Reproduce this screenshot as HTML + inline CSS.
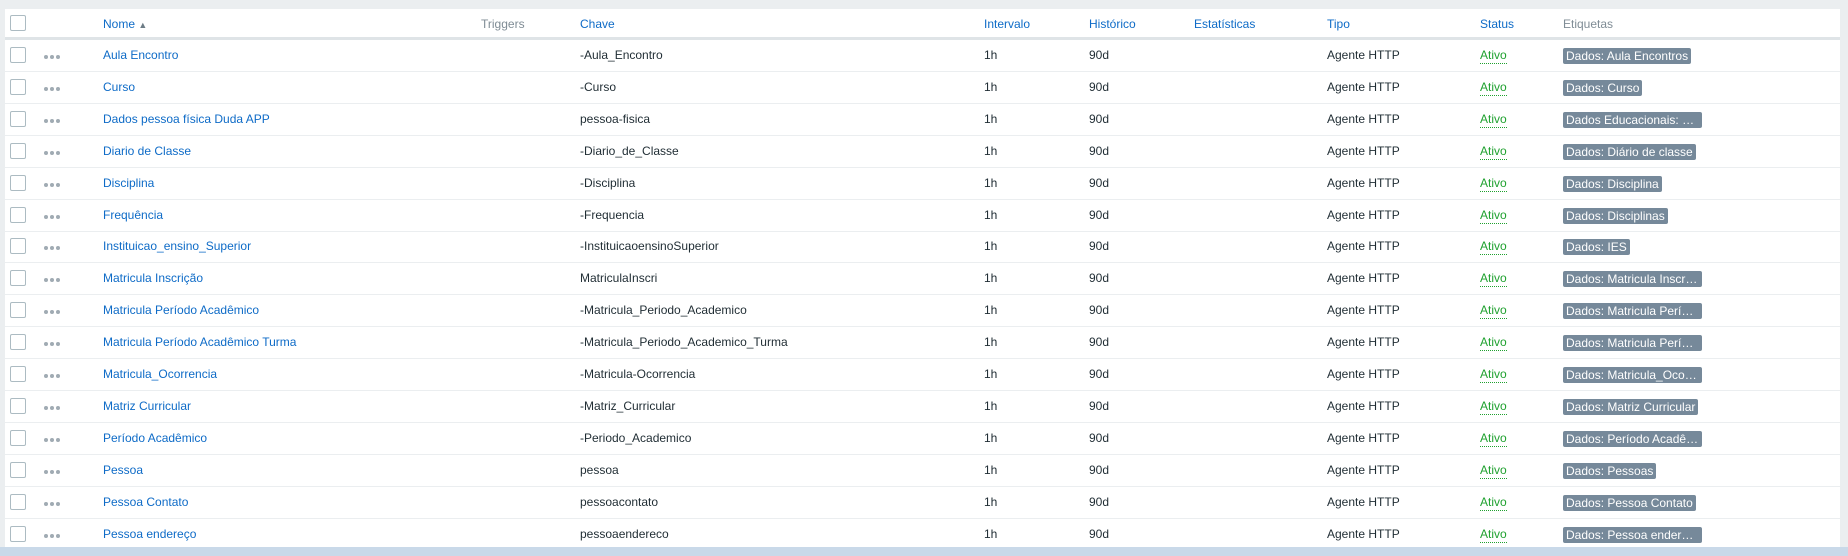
<!DOCTYPE html>
<html><head><meta charset="utf-8"><style>
*{box-sizing:border-box;margin:0;padding:0}
body{width:1848px;height:556px;background:#ebeef0;font-family:"Liberation Sans",sans-serif;font-size:12px;color:#1f2c33;position:relative;overflow:hidden}
.tbl{position:absolute;left:5px;top:9px;width:1835px;height:538px;background:#fff}
.hdr{position:absolute;left:0;top:0;width:100%;height:31px;border-bottom:3px solid #dfe4e7}
.row{position:absolute;left:0;width:100%;height:32px;border-bottom:1px solid #ebeef0}
.c{position:absolute;top:0;line-height:30px;white-space:nowrap}
.cb{position:absolute;left:5px;top:7px;width:16px;height:16px;border:1px solid #acbbc2;border-radius:2px;background:#fff}
.dots{position:absolute;left:39px;top:15px}
.dots i{display:inline-block;width:4px;height:4px;border-radius:50%;background:#a0abb3;margin-right:2px;float:left}
a{color:#0e6bc7;text-decoration:none}
.h{color:#0e6bc7}.g{color:#7f8c95}
.st{color:#1fa12f;border-bottom:1px dotted #1fa12f;line-height:15px;top:8px}
.tag{position:absolute;left:1558px;top:8px;height:16px;line-height:16px;background:#76899a;color:#fff;border-radius:2px;padding:0 3px;max-width:139px;overflow:hidden;white-space:nowrap;font-size:12px}
.bar{position:absolute;left:0;top:547px;width:1848px;height:9px;background:#c9d9e9}
</style></head><body>
<div class="tbl">
<div class="hdr"><div class="cb" style="top:6px"></div>
<div class="c h" style="left:98px">Nome <span style="font-size:9px;color:#6d7c86">▲</span></div>
<div class="c g" style="left:476px">Triggers</div>
<div class="c h" style="left:575px">Chave</div>
<div class="c h" style="left:979px">Intervalo</div>
<div class="c h" style="left:1084px">Histórico</div>
<div class="c h" style="left:1189px">Estatísticas</div>
<div class="c h" style="left:1322px">Tipo</div>
<div class="c h" style="left:1475px">Status</div>
<div class="c g" style="left:1558px">Etiquetas</div>
</div>
<div id="rows"></div>
</div>
<div class="bar"></div>
<script>
var d=[["Aula Encontro","-Aula_Encontro","Dados: Aula Encontros"],["Curso","-Curso","Dados: Curso"],["Dados pessoa física Duda APP","pessoa-fisica","Dados Educacionais: …"],["Diario de Classe","-Diario_de_Classe","Dados: Diário de classe"],["Disciplina","-Disciplina","Dados: Disciplina"],["Frequência","-Frequencia","Dados: Disciplinas"],["Instituicao_ensino_Superior","-InstituicaoensinoSuperior","Dados: IES"],["Matricula Inscrição","MatriculaInscri","Dados: Matricula Inscr…"],["Matricula Período Acadêmico","-Matricula_Periodo_Academico","Dados: Matricula Perí…"],["Matricula Período Acadêmico Turma","-Matricula_Periodo_Academico_Turma","Dados: Matricula Perí…"],["Matricula_Ocorrencia","-Matricula-Ocorrencia","Dados: Matricula_Oco…"],["Matriz Curricular","-Matriz_Curricular","Dados: Matriz Curricular"],["Período Acadêmico","-Periodo_Academico","Dados: Período Acadê…"],["Pessoa","pessoa","Dados: Pessoas"],["Pessoa Contato","pessoacontato","Dados: Pessoa Contato"],["Pessoa endereço","pessoaendereco","Dados: Pessoa ender…"]];
var h="";d.forEach(function(r,i){var t=31+i*31.9;var w=r[2].indexOf("…")>=0?' style="width:139px"':'';h+='<div class="row" style="top:'+t+'px"><div class="cb"></div><div class="dots"><i></i><i></i><i></i></div><div class="c" style="left:98px"><a>'+r[0]+'</a></div><div class="c" style="left:575px">'+r[1]+'</div><div class="c" style="left:979px">1h</div><div class="c" style="left:1084px">90d</div><div class="c" style="left:1322px">Agente HTTP</div><div class="c st" style="left:1475px">Ativo</div><div class="tag"'+w+'>'+r[2]+'</div></div>'});
document.getElementById("rows").innerHTML=h;
</script>
</body></html>
